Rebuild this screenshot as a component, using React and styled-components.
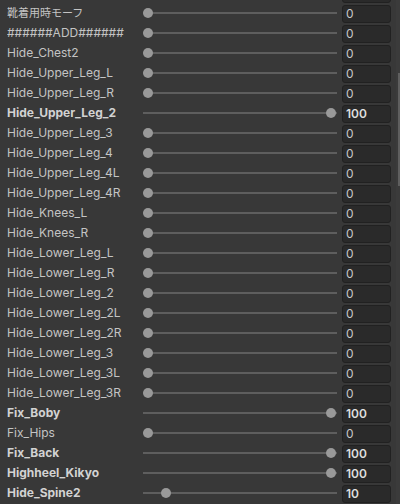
import React from 'react'
import styled, { createGlobalStyle } from 'styled-components'

const GlobalStyle = createGlobalStyle`
  html, body {
    margin: 0;
    padding: 0;
    background: #383838;
    overflow: hidden;
  }
  body {
    font-family: Inter, "Noto Sans CJK JP", sans-serif;
    font-size: 12px;
    color: #c4c4c4;
  }
`

// first entry is the row scrolled just past the top edge
const blendShapes = [
  { name: '', value: null },
  { name: '靴着用時モーフ', value: 0, cjk: true },
  { name: '######ADD######', value: 0 },
  { name: 'Hide_Chest2', value: 0 },
  { name: 'Hide_Upper_Leg_L', value: 0 },
  { name: 'Hide_Upper_Leg_R', value: 0 },
  { name: 'Hide_Upper_Leg_2', value: 100, changed: true },
  { name: 'Hide_Upper_Leg_3', value: 0 },
  { name: 'Hide_Upper_Leg_4', value: 0 },
  { name: 'Hide_Upper_Leg_4L', value: 0 },
  { name: 'Hide_Upper_Leg_4R', value: 0 },
  { name: 'Hide_Knees_L', value: 0 },
  { name: 'Hide_Knees_R', value: 0 },
  { name: 'Hide_Lower_Leg_L', value: 0 },
  { name: 'Hide_Lower_Leg_R', value: 0 },
  { name: 'Hide_Lower_Leg_2', value: 0 },
  { name: 'Hide_Lower_Leg_2L', value: 0 },
  { name: 'Hide_Lower_Leg_2R', value: 0 },
  { name: 'Hide_Lower_Leg_3', value: 0 },
  { name: 'Hide_Lower_Leg_3L', value: 0 },
  { name: 'Hide_Lower_Leg_3R', value: 0 },
  { name: 'Fix_Boby', value: 100, changed: true },
  { name: 'Fix_Hips', value: 0 },
  { name: 'Fix_Back', value: 100, changed: true },
  { name: 'Highheel_Kikyo', value: 100, changed: true },
  { name: 'Hide_Spine2', value: 10, changed: true },
]

const Inspector = styled.div`
  display: flex;
  height: 504px;
  overflow: hidden;
`

const List = styled.div`
  flex: 1;
  display: flex;
  flex-direction: column;
  margin-top: -17px;
  padding-left: 7px;
  padding-right: 5px;
`

const Row = styled.div`
  display: grid;
  grid-template-columns: 136px 1fr 54px;
  align-items: center;
  height: 20px;
  flex-shrink: 0;
`

const Label = styled.div`
  font-size: ${({ cjk }) => (cjk ? '11px' : '12px')};
  font-weight: ${({ changed }) => (changed ? 700 : 400)};
  color: ${({ changed }) => (changed ? '#d2d2d2' : '#c4c4c4')};
  white-space: nowrap;
  overflow: hidden;
  line-height: 20px;
`

const Slider = styled.div`
  position: relative;
  height: 10px;
  display: flex;
  align-items: center;
`

const Track = styled.div`
  width: 100%;
  height: 2px;
  background: #5e5e5e;
`

const Thumb = styled.div`
  position: absolute;
  top: 0;
  width: 10px;
  height: 10px;
  border-radius: 50%;
  background: #999999;
`

const Field = styled.div`
  box-sizing: border-box;
  height: 18px;
  margin: 1px 0 0 5px;
  padding-left: 3px;
  border: 1px solid #212121;
  border-radius: 3px;
  background: #2a2a2a;
  line-height: 16px;
  font-weight: ${({ changed }) => (changed ? 600 : 400)};
  color: ${({ changed }) => (changed ? '#dedede' : '#c8c8c8')};
`

const ScrollGutter = styled.div`
  width: 4px;
  flex-shrink: 0;
  background: #3b3b3b;
  display: flex;
  justify-content: flex-end;
`

const ScrollThumb = styled.div`
  width: 2px;
  height: 113px;
  margin-top: 73px;
  background: #5f5f5f;
`

const BlendShapeRow = ({ name, value, changed, cjk }) => (
  <Row>
    <Label changed={changed} cjk={cjk}>{name}</Label>
    <Slider>
      <Track />
      {value !== null && <Thumb style={{ left: `calc((100% - 11px) * ${value / 100})` }} />}
    </Slider>
    <Field changed={changed}>{value}</Field>
  </Row>
)

export default function App() {
  return (
    <>
      <GlobalStyle />
      <Inspector>
        <List>
          {blendShapes.map((shape, i) => (
            <BlendShapeRow key={i} {...shape} />
          ))}
        </List>
        <ScrollGutter>
          <ScrollThumb />
        </ScrollGutter>
      </Inspector>
    </>
  )
}
